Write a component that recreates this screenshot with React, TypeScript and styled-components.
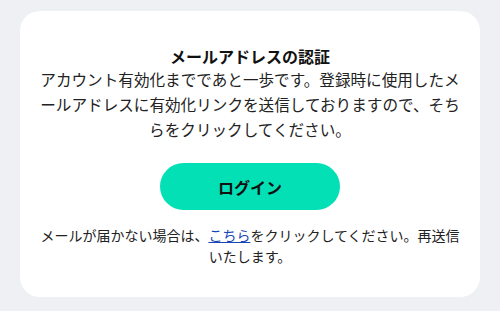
import React from 'react';
import styled, { createGlobalStyle } from 'styled-components';

const GlobalStyle = createGlobalStyle`
  html, body {
    margin: 0;
    padding: 0;
    background: #eef0f4;
  }
  body {
    font-family: 'Noto Sans CJK JP', 'Noto Sans', sans-serif;
    color: #222;
  }
`;

const Page = styled.div`
  padding: 11px 20px 13px;
`;

const Card = styled.div`
  background: #fff;
  border-radius: 20px;
  padding: 34px 20px 30px;
  text-align: center;
  line-break: loose;
`;

const Title = styled.h1`
  margin: 0;
  font-size: 16px;
  line-height: 22px;
  font-weight: 700;
  color: #111;
`;

const Message = styled.p`
  margin: 0;
  font-size: 15.6px;
  line-height: 25px;
  color: #222;
`;

const LoginButton = styled.button`
  display: block;
  margin: 21px auto 0;
  width: 180px;
  height: 47px;
  border: none;
  border-radius: 24px;
  background: #03e0b6;
  color: #111;
  font-family: inherit;
  font-size: 16px;
  font-weight: 700;
  cursor: pointer;
`;

const Note = styled.p`
  margin: 15px 0 0;
  font-size: 14px;
  line-height: 21px;
  color: #222;

  a {
    color: #1a47b8;
    text-decoration: underline;
  }
`;

const App = () => {
  return (
    <Page>
      <GlobalStyle />
      <Card>
        <Title>メールアドレスの認証</Title>
        <Message>
          アカウント有効化までであと一歩です。登録時に使用したメールアドレスに有効化リンクを送信しておりますので、そちらをクリックしてください。
        </Message>
        <LoginButton>ログイン</LoginButton>
        <Note>
          メールが届かない場合は、<a href='#'>こちら</a>をクリックしてください。再送信いたします。
        </Note>
      </Card>
    </Page>
  );
};

export default App;
